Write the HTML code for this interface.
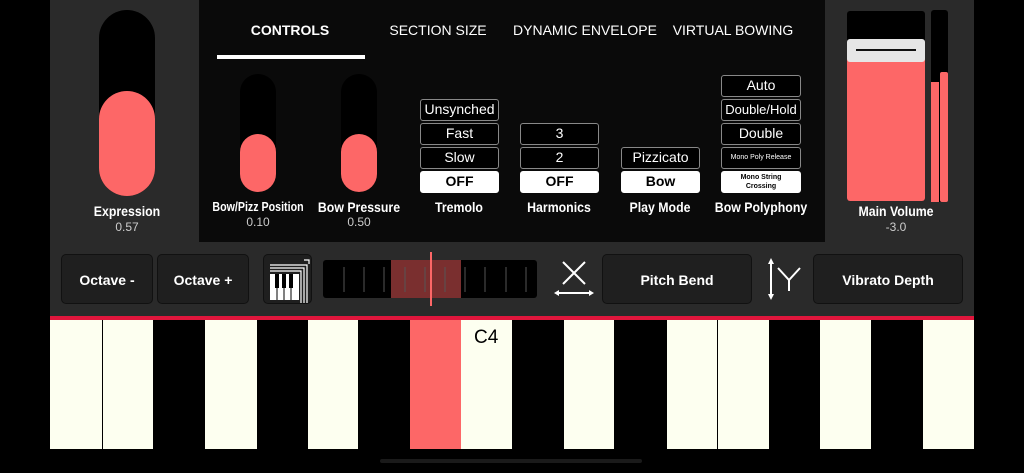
<!DOCTYPE html><html><head><style>
*{margin:0;padding:0;box-sizing:border-box}
body{width:1024px;height:473px;background:#000;position:relative;overflow:hidden;font-family:"Liberation Sans",sans-serif;color:#fff}
.a{position:absolute}
.lbl{position:absolute;text-align:center;font-weight:bold;font-size:14px;transform:scaleX(.88)}
.val{position:absolute;text-align:center;font-size:12px;color:#ccc}
.tab{position:absolute;top:22px;font-size:14px;text-align:center;width:160px}
.b{position:absolute;border:1.5px solid #888;border-radius:3px;background:#000;color:#fff;text-align:center;font-size:14px;line-height:19px;height:22px}
.b.on{background:#fff;color:#000;font-weight:bold;border-color:#fff}
.btn{position:absolute;top:254px;height:50px;background:#1f1f1f;border:1px solid #111;border-radius:5px;text-align:center;line-height:50px;font-weight:bold;font-size:14px}
.k{position:absolute;top:320px;height:129px}
.w{background:#fdfff0}
.bk{background:#000}
</style></head><body>
<div class="a" style="left:50px;top:0;width:149px;height:242px;background:#2a2a2a"></div>
<div class="a" style="left:199px;top:0;width:626px;height:242px;background:#0a0a0a"></div>
<div class="a" style="left:825px;top:0;width:149px;height:242px;background:#2a2a2a"></div>
<!-- expression -->
<div class="a" style="left:99px;top:10px;width:56px;height:186px;background:#000;border-radius:28px"></div>
<div class="a" style="left:99px;top:91px;width:56px;height:105px;background:#fd6767;border-radius:28px"></div>
<div class="lbl" style="left:77px;top:203px;width:100px">Expression</div>
<div class="val" style="left:77px;top:220px;width:100px">0.57</div>
<!-- tabs -->
<div class="tab" style="left:210px;font-weight:bold">CONTROLS</div>
<div class="a" style="left:217px;top:55px;width:148px;height:4px;background:#fff"></div>
<div class="tab" style="left:358px">SECTION SIZE</div>
<div class="tab" style="left:505px">DYNAMIC ENVELOPE</div>
<div class="tab" style="left:653px">VIRTUAL BOWING</div>
<!-- small sliders -->
<div class="a" style="left:240px;top:74px;width:36px;height:118px;background:#000;border-radius:18px"></div>
<div class="a" style="left:240px;top:134px;width:36px;height:58px;background:#fd6767;border-radius:18px"></div>
<div class="a" style="left:341px;top:74px;width:36px;height:118px;background:#000;border-radius:18px"></div>
<div class="a" style="left:341px;top:134px;width:36px;height:58px;background:#fd6767;border-radius:18px"></div>
<div class="lbl" style="left:198px;top:199px;width:120px;font-size:13px;transform:scaleX(.82)">Bow/Pizz Position</div>
<div class="val" style="left:208px;top:215px;width:100px">0.10</div>
<div class="lbl" style="left:304px;top:199px;width:110px">Bow Pressure</div>
<div class="val" style="left:309px;top:215px;width:100px">0.50</div>
<!-- button groups -->
<div class="b" style="left:420px;top:99px;width:79px">Unsynched</div>
<div class="b" style="left:420px;top:123px;width:79px">Fast</div>
<div class="b" style="left:420px;top:147px;width:79px">Slow</div>
<div class="b on" style="left:420px;top:171px;width:79px">OFF</div>
<div class="lbl" style="left:409px;top:199px;width:100px">Tremolo</div>
<div class="b" style="left:520px;top:123px;width:79px">3</div>
<div class="b" style="left:520px;top:147px;width:79px">2</div>
<div class="b on" style="left:520px;top:171px;width:79px">OFF</div>
<div class="lbl" style="left:509px;top:199px;width:100px">Harmonics</div>
<div class="b" style="left:621px;top:147px;width:79px">Pizzicato</div>
<div class="b on" style="left:621px;top:171px;width:79px">Bow</div>
<div class="lbl" style="left:610px;top:199px;width:100px">Play Mode</div>
<div class="b" style="left:721px;top:75px;width:80px">Auto</div>
<div class="b" style="left:721px;top:99px;width:80px;font-size:13px">Double/Hold</div>
<div class="b" style="left:721px;top:123px;width:80px">Double</div>
<div class="b" style="left:721px;top:147px;width:80px;font-size:7px">Mono Poly Release</div>
<div class="b on" style="left:721px;top:171px;width:80px;font-size:7px;line-height:9px;padding-top:1px">Mono String<br>Crossing</div>
<div class="lbl" style="left:701px;top:199px;width:120px">Bow Polyphony</div>
<!-- volume -->
<div class="a" style="left:847px;top:11px;width:78px;height:190px;background:#000;border-radius:3px"></div>
<div class="a" style="left:847px;top:58px;width:78px;height:143px;background:#fd6767;border-radius:0 0 3px 3px"></div>
<div class="a" style="left:847px;top:39px;width:78px;height:23px;background:#e6e6e6;border-radius:3px"></div>
<div class="a" style="left:856px;top:49px;width:60px;height:2px;background:#111"></div>
<div class="a" style="left:931px;top:10px;width:17px;height:192px;background:#000;border-radius:3px"></div>
<div class="a" style="left:931px;top:82px;width:8px;height:120px;background:#fd6767"></div>
<div class="a" style="left:940px;top:72px;width:8px;height:130px;background:#fd6767;border-radius:2px"></div>
<div class="lbl" style="left:846px;top:203px;width:100px">Main Volume</div>
<div class="val" style="left:846px;top:220px;width:100px">-3.0</div>
<!-- bar -->
<div class="a" style="left:50px;top:242px;width:924px;height:74px;background:#2a2a2a"></div>
<div class="a" style="left:50px;top:316px;width:924px;height:4px;background:#e0163c"></div>
<div class="btn" style="left:61px;width:92px">Octave -</div>
<div class="btn" style="left:157px;width:92px">Octave +</div>
<div class="btn" style="left:263px;width:49px;border-radius:5px">
<svg width="49" height="50" style="position:absolute;left:0;top:0"><g fill="none" stroke="#fff" stroke-width="1.2"><path d="M6 16H37V48M6 13H40V48M6 10H43V48"/><path d="M40 5H45V9"/></g><rect x="6" y="19" width="29" height="26" fill="#fff"/><g stroke="#000" stroke-width="1"><path d="M13 19V45M20 19V45M27 19V45"/></g><g fill="#000"><rect x="11" y="19" width="4" height="14"/><rect x="18" y="19" width="4" height="14"/><rect x="25" y="19" width="4" height="14"/></g></svg></div>
<div class="a" style="left:323px;top:260px;width:214px;height:38px;background:#000;border-radius:3px"></div>
<div class="a" style="left:391px;top:260px;width:70px;height:38px;background:#7a2f2f"></div>
<svg class="a" style="left:323px;top:260px" width="214" height="38"><g stroke="#555" stroke-width="1"><path d="M21 7V32M41 7V32M61 7V32M82 7V32M102 7V32M122 7V32M142 7V32M162 7V32M183 7V32M203 7V32"/></g></svg>
<div class="a" style="left:430px;top:252px;width:2px;height:54px;background:#fd6767"></div>
<svg class="a" style="left:553px;top:260px" width="42" height="40"><g stroke="#fff" stroke-width="2" fill="none"><path d="M10 2L32 24M32 2L10 24"/><path d="M3 33H39"/></g><path d="M1 33L6 30V36ZM41 33L36 30V36Z" fill="#fff"/></svg>
<div class="btn" style="left:602px;width:150px">Pitch Bend</div>
<svg class="a" style="left:764px;top:258px" width="40" height="42"><g stroke="#fff" stroke-width="2" fill="none"><path d="M7 4V38"/><path d="M14 10L25 22L36 10M25 22V33"/></g><path d="M7 0L4 6H10ZM7 42L4 36H10Z" fill="#fff"/></svg>
<div class="btn" style="left:813px;width:150px">Vibrato Depth</div>
<!-- keys -->
<div class="k w" style="left:50px;width:52px"></div>
<div class="k w" style="left:103px;width:50px"></div>
<div class="k bk" style="left:153px;width:52px"></div>
<div class="k w" style="left:205px;width:52px"></div>
<div class="k bk" style="left:257px;width:51px"></div>
<div class="k w" style="left:308px;width:50px"></div>
<div class="k bk" style="left:358px;width:52px"></div>
<div class="k" style="left:410px;width:51px;background:#fd6767"></div>
<div class="k w" style="left:461px;width:51px"><div style="color:#000;font-size:19px;padding:7px 0 0 13px">C4</div></div>
<div class="k bk" style="left:512px;width:52px"></div>
<div class="k w" style="left:564px;width:50px"></div>
<div class="k bk" style="left:614px;width:53px"></div>
<div class="k w" style="left:667px;width:50px"></div>
<div class="k w" style="left:718px;width:51px"></div>
<div class="k bk" style="left:769px;width:51px"></div>
<div class="k w" style="left:820px;width:51px"></div>
<div class="k bk" style="left:871px;width:52px"></div>
<div class="k w" style="left:923px;width:51px"></div>
<div class="a" style="left:380px;top:459px;width:262px;height:4px;background:#1a1a1a;border-radius:2px"></div>
</body></html>
